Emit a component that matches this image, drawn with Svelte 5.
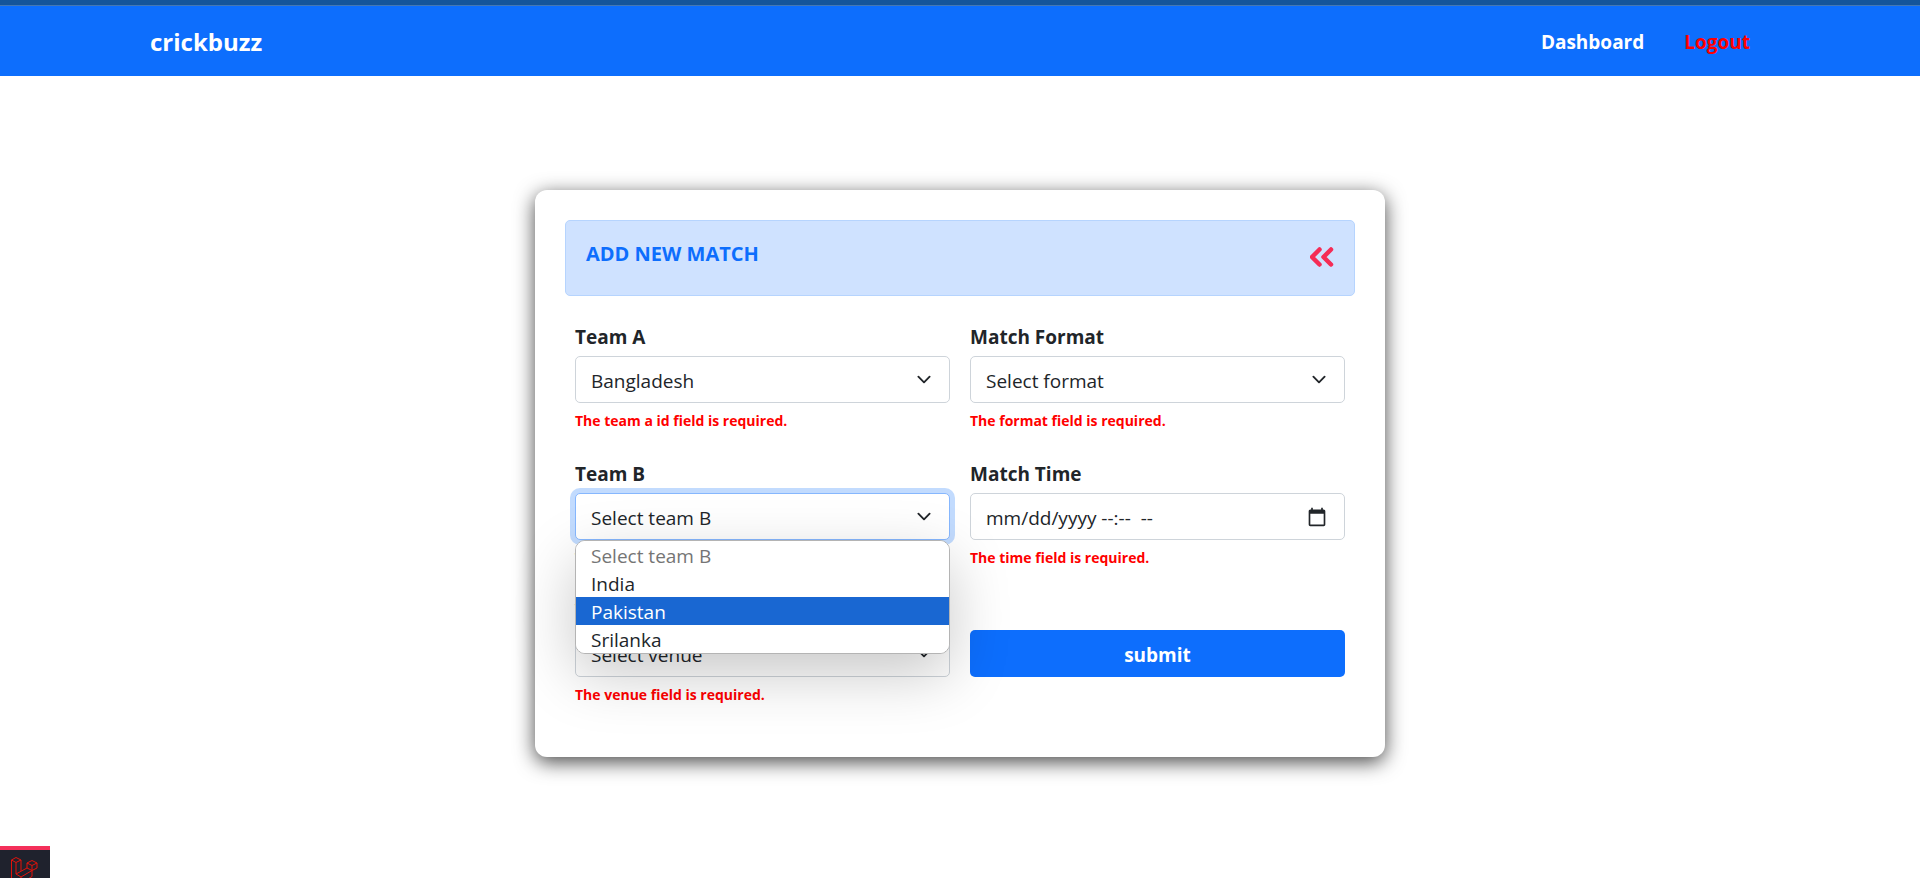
<script lang="ts">
    type Option = { value: string; label: string; disabled?: boolean };

    const teams: Option[] = [
        { value: "", label: "Select team B", disabled: true },
        { value: "india", label: "India" },
        { value: "pakistan", label: "Pakistan" },
        { value: "srilanka", label: "Srilanka" },
    ];

    let teamA = $state("bangladesh");
    let teamB = $state("");
    let format = $state("");
    let venue = $state("");
    let time = $state("");
    let menuOpen = $state(true);
    let highlighted = $state("pakistan");

    let errors = $state({
        teamA: "The team a id field is required.",
        teamB: "The team b id field is required.",
        format: "The format field is required.",
        time: "The time field is required.",
        venue: "The venue field is required.",
    });

    function pickTeam(option: Option) {
        if (option.disabled) return;
        teamB = option.value;
        menuOpen = false;
    }

    function toggleMenu(e: MouseEvent) {
        e.preventDefault();
        menuOpen = !menuOpen;
    }

    function handleKeydown(e: KeyboardEvent) {
        if (e.key === "Escape") menuOpen = false;
    }
</script>

<svelte:window onkeydown={handleKeydown} />

<div class="loading-bar"></div>
<header class="navbar">
    <div class="container">
        <a class="brand" href="/">crickbuzz</a>
        <nav>
            <a href="/dashboard">Dashboard</a>
            <a class="logout" href="/logout">Logout</a>
        </nav>
    </div>
</header>

<main>
    <section class="card">
        <div class="alert">
            <h1>ADD NEW MATCH</h1>
            <a class="back" href="/matches" aria-label="Back">
                <svg viewBox="0 0 24 20">
                    <path d="M9.5 2.5 2 10l7.5 7.5M21 2.5 13.5 10l7.5 7.5" />
                </svg>
            </a>
        </div>

        <form onsubmit={(e) => e.preventDefault()}>
            <div class="field">
                <label for="team-a">Team A</label>
                <select id="team-a" bind:value={teamA}>
                    <option value="bangladesh">Bangladesh</option>
                    <option value="india">India</option>
                </select>
                <p class="error">{errors.teamA}</p>
            </div>

            <div class="field">
                <label for="format">Match Format</label>
                <select id="format" bind:value={format}>
                    <option value="" disabled>Select format</option>
                    <option value="t20">T20</option>
                    <option value="odi">ODI</option>
                </select>
                <p class="error">{errors.format}</p>
            </div>

            <div class="field">
                <label for="team-b">Team B</label>
                <div class="dropdown">
                    <select
                        id="team-b"
                        class:is-open={menuOpen}
                        bind:value={teamB}
                        onmousedown={toggleMenu}
                    >
                        {#each teams as team}
                            <option value={team.value} disabled={team.disabled}>{team.label}</option>
                        {/each}
                    </select>
                    {#if menuOpen}
                        <div class="menu" role="listbox" aria-label="Team B">
                            {#each teams as team}
                                <button
                                    type="button"
                                    role="option"
                                    aria-selected={team.value === teamB}
                                    class:is-active={team.value === highlighted}
                                    disabled={team.disabled}
                                    onmouseenter={() => (highlighted = team.value)}
                                    onclick={() => pickTeam(team)}
                                >
                                    {team.label}
                                </button>
                            {/each}
                        </div>
                    {/if}
                </div>
                <p class="error">{errors.teamB}</p>
            </div>

            <div class="field">
                <label for="time">Match Time</label>
                <input
                    id="time"
                    class="time"
                    type="text"
                    placeholder="mm/dd/yyyy --:--  --"
                    bind:value={time}
                />
                <p class="error">{errors.time}</p>
            </div>

            <div class="field">
                <label for="venue">Venue</label>
                <select id="venue" bind:value={venue}>
                    <option value="" disabled>Select venue</option>
                    <option value="dhaka">Dhaka</option>
                </select>
                <p class="error">{errors.venue}</p>
            </div>

            <div class="field action">
                <button class="submit" type="submit">submit</button>
            </div>
        </form>
    </section>
</main>

<button class="debugbar" aria-label="Open debug bar">
    <svg viewBox="0 0 28 24">
        <path
            d="M1.5 3 6 .5 11 3 6 5.5zM1.5 3v18l9.5 5 11-6.5v-6M6 5.5V17l5 3 11-6.5M11 3v11M17 6l5-2.5L27 6l-5 2.5zM17 6v5l5 2.5 5-2.5V6M22 8.5v5M17 11 6 17M11 20v6"
        />
    </svg>
</button>

<style>
    :global(body) {
        margin: 0;
        background: #fff;
        color: #212529;
        font-family: "Open Sans", "Noto Sans", sans-serif;
        font-size: 19px;
        line-height: 30px;
    }

    .loading-bar {
        height: 5px;
        background: #14559b;
        border-bottom: 1px solid #4478b4;
    }

    .navbar {
        background: #0d6efd;
    }

    .container {
        display: flex;
        align-items: center;
        justify-content: space-between;
        box-sizing: border-box;
        max-width: 1650px;
        height: 70px;
        margin: 0 auto;
        padding: 2px 15px 0;
    }

    .container a {
        color: #fff;
        font-weight: 700;
        text-decoration: none;
    }

    .container .brand {
        font-size: 24px;
    }

    nav {
        display: flex;
        gap: 40px;
        padding-right: 20px;
    }

    .container .logout {
        color: #f00;
    }

    main {
        padding: 114px 20px;
    }

    .card {
        box-sizing: border-box;
        max-width: 850px;
        margin: 0 auto;
        padding: 30px 30px 52px;
        border-radius: 12px;
        background: #fff;
        box-shadow: 0 5px 20px rgba(0, 0, 0, 0.72);
    }

    .alert {
        display: flex;
        align-items: flex-start;
        justify-content: space-between;
        box-sizing: border-box;
        height: 76px;
        padding: 18px 20px;
        border: 1px solid #b6d4fe;
        border-radius: 5px;
        background: #cfe2ff;
    }

    h1 {
        margin: 0;
        color: #0d6efd;
        font-size: 20px;
        font-weight: 700;
    }

    .back {
        display: flex;
        padding-top: 8px;
    }

    .back svg {
        width: 24px;
        height: 20px;
        fill: none;
        stroke: #f52c56;
        stroke-width: 4.5;
        stroke-linecap: round;
        stroke-linejoin: round;
    }

    form {
        display: grid;
        grid-template-columns: 1fr 1fr;
        gap: 28px 20px;
        padding: 26px 10px 0;
    }

    label {
        display: block;
        margin-bottom: 4px;
        font-weight: 700;
    }

    select,
    input {
        display: block;
        box-sizing: border-box;
        width: 100%;
        height: 47px;
        padding: 2px 15px 0;
        border: 1px solid #ced4da;
        border-radius: 5px;
        outline: none;
        background-color: #fff;
        background-repeat: no-repeat;
        background-position: right 15px center;
        background-size: 20px 15px;
        color: #212529;
        font: inherit;
        appearance: none;
    }

    select {
        background-image: url("data:image/svg+xml,%3csvg xmlns='http://www.w3.org/2000/svg' viewBox='0 0 16 16'%3e%3cpath fill='none' stroke='%23212529' stroke-linecap='round' stroke-linejoin='round' stroke-width='2' d='m2 5 6 6 6-6'/%3e%3c/svg%3e");
    }

    .time {
        background-image: url("data:image/svg+xml,%3csvg xmlns='http://www.w3.org/2000/svg' viewBox='0 0 24 24'%3e%3cpath fill='%23212529' d='M20 3h-1V1h-2v2H7V1H5v2H4c-1.1 0-2 .9-2 2v16c0 1.1.9 2 2 2h16c1.1 0 2-.9 2-2V5c0-1.1-.9-2-2-2zm0 18H4V8h16v13z'/%3e%3c/svg%3e");
        background-position: right 17px center;
        background-size: 20px 20px;
    }

    .time::placeholder {
        color: #212529;
    }

    select.is-open {
        border-color: #86b7fe;
        box-shadow: 0 0 0 5px rgba(13, 110, 253, 0.25);
    }

    .error {
        margin: 8px 0 0;
        color: #f00;
        font-size: 14px;
        font-weight: 700;
        line-height: 20px;
    }

    .dropdown {
        position: relative;
    }

    .menu {
        position: absolute;
        top: 100%;
        left: 0;
        right: 0;
        z-index: 10;
        overflow: hidden;
        border: 1px solid #b4b4b4;
        border-radius: 10px;
        background: #fff;
        box-shadow: 0 20px 60px rgba(0, 0, 0, 0.22);
    }

    .menu button {
        display: block;
        width: 100%;
        height: 28px;
        padding: 2px 15px 0;
        border: none;
        background: #fff;
        color: #212529;
        font: inherit;
        line-height: 26px;
        text-align: left;
    }

    .menu button:disabled {
        color: #757575;
    }

    .menu button.is-active {
        background: #1967d2;
        color: #fff;
    }

    .action {
        padding-top: 34px;
    }

    .submit {
        width: 100%;
        height: 47px;
        padding: 2px 15px 0;
        border: none;
        border-radius: 5px;
        background: #0d6efd;
        color: #fff;
        font: inherit;
        font-weight: 700;
        cursor: pointer;
    }

    .debugbar {
        position: fixed;
        left: 0;
        bottom: 0;
        width: 50px;
        height: 32px;
        padding: 7px 0 0 10px;
        overflow: hidden;
        border: none;
        border-top: 4px solid #f4305a;
        background: #1f222d;
    }

    .debugbar svg {
        display: block;
        width: 28px;
        height: 24px;
        fill: none;
        stroke: #e3120b;
        stroke-width: 1;
        overflow: visible;
    }
</style>
